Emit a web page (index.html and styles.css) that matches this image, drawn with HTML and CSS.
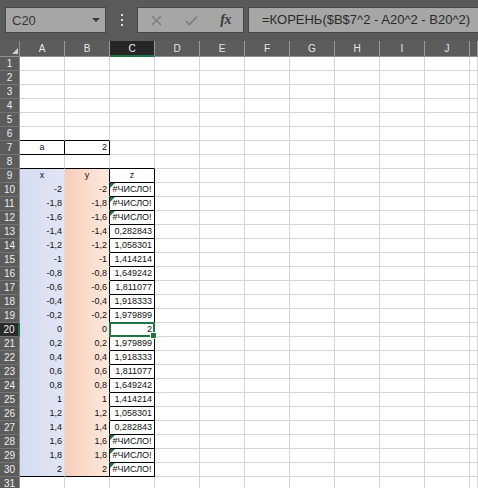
FILE: index.html
```html
<!DOCTYPE html>
<html lang="ru">
<head>
<meta charset="utf-8">
<title>Excel</title>
<link rel="stylesheet" href="styles.css">
</head>
<body>
<div class="toolbar">
  <div class="namebox"><span>C20</span><span class="caret"></span></div>
  <div class="dots"><span></span><span></span><span></span></div>
  <div class="fxgroup">
    <span class="slot"><svg width="11" height="11" viewBox="0 0 11 11"><path d="M1 1L10 10M10 1L1 10" stroke="#7c7c7c" stroke-width="1.4" fill="none"/></svg></span>
    <span class="slot"><svg width="13" height="11" viewBox="0 0 13 11"><path d="M1 6L4.5 9.5L12 1.5" stroke="#7c7c7c" stroke-width="1.6" fill="none"/></svg></span>
    <span class="slot fx">fx</span>
  </div>
  <div class="formula">=КОРЕНЬ($B$7^2 - A20^2 - B20^2)</div>
</div>
<div class="sheet">
<span class="corner"><span class="tri"></span></span><span class="ch">A</span><span class="ch">B</span><span class="ch on">C</span><span class="ch">D</span><span class="ch">E</span><span class="ch">F</span><span class="ch">G</span><span class="ch">H</span><span class="ch">I</span><span class="ch">J</span><span class="ch"></span>
<span class="rh">1</span><span></span><span></span><span></span><span></span><span></span><span></span><span></span><span></span><span></span><span></span><span></span>
<span class="rh">2</span><span></span><span></span><span></span><span></span><span></span><span></span><span></span><span></span><span></span><span></span><span></span>
<span class="rh">3</span><span></span><span></span><span></span><span></span><span></span><span></span><span></span><span></span><span></span><span></span><span></span>
<span class="rh">4</span><span></span><span></span><span></span><span></span><span></span><span></span><span></span><span></span><span></span><span></span><span></span>
<span class="rh">5</span><span></span><span></span><span></span><span></span><span></span><span></span><span></span><span></span><span></span><span></span><span></span>
<span class="rh">6</span><span class="bb"></span><span class="bb"></span><span></span><span></span><span></span><span></span><span></span><span></span><span></span><span></span><span></span>
<span class="rh">7</span><span class="ctr bb br">a</span><span class="bb br">2</span><span></span><span></span><span></span><span></span><span></span><span></span><span></span><span></span><span></span>
<span class="rh">8</span><span class="bb"></span><span class="bb"></span><span class="bb"></span><span></span><span></span><span></span><span></span><span></span><span></span><span></span><span></span>
<span class="rh">9</span><span class="x ctr">x</span><span class="y ctr br">y</span><span class="ctr br bb">z</span><span></span><span></span><span></span><span></span><span></span><span></span><span></span><span></span>
<span class="rh">10</span><span class="x">-2</span><span class="y br">-2</span><span class="err br bb">#ЧИСЛО!</span><span></span><span></span><span></span><span></span><span></span><span></span><span></span><span></span>
<span class="rh">11</span><span class="x">-1,8</span><span class="y br">-1,8</span><span class="err br bb">#ЧИСЛО!</span><span></span><span></span><span></span><span></span><span></span><span></span><span></span><span></span>
<span class="rh">12</span><span class="x">-1,6</span><span class="y br">-1,6</span><span class="err br bb">#ЧИСЛО!</span><span></span><span></span><span></span><span></span><span></span><span></span><span></span><span></span>
<span class="rh">13</span><span class="x">-1,4</span><span class="y br">-1,4</span><span class="br bb">0,282843</span><span></span><span></span><span></span><span></span><span></span><span></span><span></span><span></span>
<span class="rh">14</span><span class="x">-1,2</span><span class="y br">-1,2</span><span class="br bb">1,058301</span><span></span><span></span><span></span><span></span><span></span><span></span><span></span><span></span>
<span class="rh">15</span><span class="x">-1</span><span class="y br">-1</span><span class="br bb">1,414214</span><span></span><span></span><span></span><span></span><span></span><span></span><span></span><span></span>
<span class="rh">16</span><span class="x">-0,8</span><span class="y br">-0,8</span><span class="br bb">1,649242</span><span></span><span></span><span></span><span></span><span></span><span></span><span></span><span></span>
<span class="rh">17</span><span class="x">-0,6</span><span class="y br">-0,6</span><span class="br bb">1,811077</span><span></span><span></span><span></span><span></span><span></span><span></span><span></span><span></span>
<span class="rh">18</span><span class="x">-0,4</span><span class="y br">-0,4</span><span class="br bb">1,918333</span><span></span><span></span><span></span><span></span><span></span><span></span><span></span><span></span>
<span class="rh">19</span><span class="x">-0,2</span><span class="y br">-0,2</span><span class="br bb">1,979899</span><span></span><span></span><span></span><span></span><span></span><span></span><span></span><span></span>
<span class="rh on">20</span><span class="x">0</span><span class="y br">0</span><span class="sel br bb">2</span><span></span><span></span><span></span><span></span><span></span><span></span><span></span><span></span>
<span class="rh">21</span><span class="x">0,2</span><span class="y br">0,2</span><span class="br bb">1,979899</span><span></span><span></span><span></span><span></span><span></span><span></span><span></span><span></span>
<span class="rh">22</span><span class="x">0,4</span><span class="y br">0,4</span><span class="br bb">1,918333</span><span></span><span></span><span></span><span></span><span></span><span></span><span></span><span></span>
<span class="rh">23</span><span class="x">0,6</span><span class="y br">0,6</span><span class="br bb">1,811077</span><span></span><span></span><span></span><span></span><span></span><span></span><span></span><span></span>
<span class="rh">24</span><span class="x">0,8</span><span class="y br">0,8</span><span class="br bb">1,649242</span><span></span><span></span><span></span><span></span><span></span><span></span><span></span><span></span>
<span class="rh">25</span><span class="x">1</span><span class="y br">1</span><span class="br bb">1,414214</span><span></span><span></span><span></span><span></span><span></span><span></span><span></span><span></span>
<span class="rh">26</span><span class="x">1,2</span><span class="y br">1,2</span><span class="br bb">1,058301</span><span></span><span></span><span></span><span></span><span></span><span></span><span></span><span></span>
<span class="rh">27</span><span class="x">1,4</span><span class="y br">1,4</span><span class="br bb">0,282843</span><span></span><span></span><span></span><span></span><span></span><span></span><span></span><span></span>
<span class="rh">28</span><span class="x">1,6</span><span class="y br">1,6</span><span class="err br bb">#ЧИСЛО!</span><span></span><span></span><span></span><span></span><span></span><span></span><span></span><span></span>
<span class="rh">29</span><span class="x">1,8</span><span class="y br">1,8</span><span class="err br bb">#ЧИСЛО!</span><span></span><span></span><span></span><span></span><span></span><span></span><span></span><span></span>
<span class="rh">30</span><span class="x bb">2</span><span class="y br bb">2</span><span class="err br bb">#ЧИСЛО!</span><span></span><span></span><span></span><span></span><span></span><span></span><span></span><span></span>
<span class="rh">31</span><span></span><span></span><span></span><span></span><span></span><span></span><span></span><span></span><span></span><span></span><span></span>
</div>
</body>
</html>
```
FILE: styles.css
```css
body {
  margin: 0;
  width: 478px;
  height: 488px;
  overflow: hidden;
  background: #fff;
  font-family: "Liberation Sans", Arial, sans-serif;
}

.toolbar {
  display: flex;
  align-items: flex-start;
  height: 41px;
  box-sizing: border-box;
  padding: 7px 0 0 5px;
  background: #5a5a5a;
}

.namebox {
  box-sizing: border-box;
  width: 101px;
  height: 26px;
  border: 1px solid #474747;
  background: #a6a6a6;
  display: flex;
  align-items: center;
  justify-content: space-between;
  padding: 0 5px 0 6px;
  font-size: 13px;
  color: #363636;
}

.caret {
  width: 0;
  height: 0;
  border-left: 4px solid transparent;
  border-right: 4px solid transparent;
  border-top: 4px solid #3a3a3a;
}

.dots {
  width: 31px;
  height: 26px;
  display: flex;
  flex-direction: column;
  align-items: center;
  justify-content: center;
  gap: 3px;
}

.dots span {
  width: 2px;
  height: 2px;
  background: #dcdcdc;
}

.fxgroup {
  box-sizing: border-box;
  width: 107px;
  height: 26px;
  border: 1px solid #474747;
  background: #a6a6a6;
  display: flex;
  align-items: center;
  padding-left: 1px;
}

.slot {
  width: 35px;
  display: flex;
  justify-content: center;
  align-items: center;
}

.fx {
  font-family: "Liberation Serif", "Times New Roman", serif;
  font-style: italic;
  font-weight: bold;
  font-size: 14px;
  color: #3a3a3a;
  letter-spacing: -0.5px;
}

.formula {
  flex: 1;
  margin-left: 4px;
  box-sizing: border-box;
  height: 26px;
  border: 1px solid #474747;
  border-right: none;
  background: #a6a6a6;
  padding-left: 13px;
  font-size: 13px;
  line-height: 24px;
  color: #2b2b2b;
  white-space: nowrap;
}

.sheet {
  display: grid;
  grid-template-columns: 20px repeat(10, 45px) 1fr;
  grid-template-rows: 16px;
  grid-auto-rows: 14px;
}

.sheet > * {
  box-sizing: border-box;
  border-right: 1px solid #d4d4d4;
  border-bottom: 1px solid #d4d4d4;
  font-size: 9px;
  line-height: 13px;
  padding: 0 2px;
  white-space: nowrap;
  overflow: hidden;
  text-align: right;
  color: #111;
}

.corner {
  background: #5c5c5c;
  border-right-color: #8f8f8f;
  border-bottom-color: #8f8f8f;
  display: flex;
  align-items: flex-end;
  justify-content: flex-end;
  padding: 0 1px 2px 0;
}

.tri {
  width: 0;
  height: 0;
  border-left: 6px solid transparent;
  border-bottom: 6px solid #cfcfcf;
}

.ch {
  background: #5c5c5c;
  color: #e6e6e6;
  text-align: center;
  font-size: 10px;
  line-height: 15px;
  border-right-color: #9a9a9a;
  border-bottom-color: #8f8f8f;
}

.ch.on {
  background: #262626;
  color: #f2f2f2;
  border-bottom: 2px solid #217346;
}

.rh {
  background: #5c5c5c;
  color: #ececec;
  text-align: center;
  font-size: 10px;
  padding: 0;
  border-right-color: #8f8f8f;
  border-bottom-color: #747474;
}

.rh.on {
  background: #2a2a2a;
  border-right: 2px solid #217346;
}

.ctr {
  text-align: center;
}

.x {
  background: linear-gradient(90deg, #d5dcf1, #e1e6f5);
  border-right-color: transparent;
  border-bottom-color: transparent;
}

.y {
  background: linear-gradient(90deg, #f7ceb8, #fde9de);
  border-bottom-color: transparent;
}

.err {
  position: relative;
  text-align: center;
}

.err::before {
  content: "";
  position: absolute;
  top: 0;
  left: 0;
  border-top: 5px solid #1e7145;
  border-right: 5px solid transparent;
}

.sel {
  position: relative;
  overflow: visible;
  z-index: 1;
}

.sel::before {
  content: "";
  position: absolute;
  inset: -1px;
  border: 2px solid #217346;
}

.sel::after {
  content: "";
  position: absolute;
  right: -3px;
  bottom: -3px;
  width: 5px;
  height: 5px;
  background: #217346;
  border: 1px solid #fff;
}

.bb {
  border-bottom-color: #000;
}

.br {
  border-right-color: #000;
}
```
